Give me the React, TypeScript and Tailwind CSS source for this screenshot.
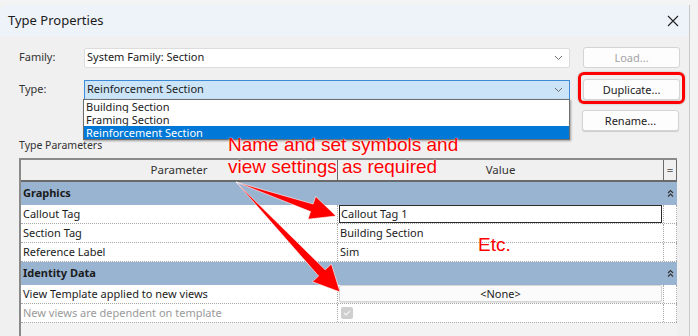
import type { ReactNode } from "react";

const UI = "font-['Noto_Sans','Open_Sans',sans-serif]";

function Chevron() {
  return (
    <svg width="9" height="6" viewBox="0 0 9 6" className="shrink-0">
      <path d="M1 1 L4.5 4.5 L8 1" fill="none" stroke="#6b6b6b" strokeWidth="1" />
    </svg>
  );
}

function Collapse() {
  return (
    <svg width="7" height="9" viewBox="0 0 7 9">
      <path d="M1 4 L3.5 1.5 L6 4 M1 7.5 L3.5 5 L6 7.5" fill="none" stroke="#333" strokeWidth="1.2" />
    </svg>
  );
}

function Button({ children, disabled }: { children: ReactNode; disabled?: boolean }) {
  return (
    <button
      type="button"
      className={`h-[21px] w-[97px] shrink-0 rounded-[3px] border border-[#d4d4d4] bg-[#fdfdfd] text-[11px] leading-none ${
        disabled ? "text-[#a3a3a3]" : "text-[#1b1b1b] shadow-[0_1px_1px_rgba(0,0,0,0.15)]"
      }`}
    >
      {children}
    </button>
  );
}

const rows: { kind: "group" | "row"; name: string; value?: ReactNode; muted?: boolean }[] = [
  { kind: "group", name: "Graphics" },
  {
    kind: "row",
    name: "Callout Tag",
    value: (
      <div className="mx-px flex h-[18px] items-center border border-[#2b2b2b] bg-white px-[1px]">Callout Tag 1</div>
    ),
  },
  { kind: "row", name: "Section Tag", value: <span className="pl-[2px]">Building Section</span> },
  { kind: "row", name: "Reference Label", value: <span className="pl-[2px]">Sim</span> },
  { kind: "group", name: "Identity Data" },
  {
    kind: "row",
    name: "View Template applied to new views",
    value: (
      <div className="mx-px flex h-[17px] items-center justify-center rounded-[2px] border border-[#d6d6d6] bg-[#fbfbfb] shadow-[0_1px_1px_rgba(0,0,0,0.12)]">
        &lt;None&gt;
      </div>
    ),
  },
  {
    kind: "row",
    name: "New views are dependent on template",
    muted: true,
    value: (
      <div className="ml-[3px] flex h-[12px] w-[12px] items-center justify-center rounded-[2px] bg-[#cfcfcf]">
        <svg width="8" height="6" viewBox="0 0 8 6">
          <path d="M1 3 L3 5 L7 1" fill="none" stroke="#f4f4f4" strokeWidth="1.2" />
        </svg>
      </div>
    ),
  },
];

export default function App() {
  return (
    <div className={`relative h-[336px] w-[698px] overflow-hidden bg-[#f3f3f3] pt-[5px] text-[#1b1b1b] ${UI}`}>
      <div className="flex h-[331px] w-[690px] flex-col overflow-hidden rounded-tl-[8px] border-r border-[#c9c9c9] bg-[#f0f0f0]">
        {/* title bar */}
        <div className="flex h-[31px] shrink-0 items-center justify-between bg-[#eef2f9] pl-[8px] pr-[10px]">
          <span className="text-[13px]">Type Properties</span>
          <svg width="12" height="12" viewBox="0 0 12 12">
            <path d="M1 1 L11 11 M11 1 L1 11" stroke="#222" strokeWidth="1.1" />
          </svg>
        </div>

        <div className="flex flex-col pl-[19px] pr-[10px] pt-[11px] text-[11px]">
          {/* family */}
          <div className="flex items-center">
            <span className="w-[65px] shrink-0 text-[#333]">Family:</span>
            <div className="flex h-[20px] w-[486px] shrink-0 items-center justify-between rounded-[2px] border border-[#dcdcdc] bg-white pl-[2px] pr-[6px]">
              <span>System Family: Section</span>
              <Chevron />
            </div>
            <div className="ml-[13px]">
              <Button disabled>Load...</Button>
            </div>
          </div>

          {/* type */}
          <div className="relative mt-[11px] flex items-center">
            <span className="w-[65px] shrink-0 text-[#333]">Type:</span>
            <div className="flex h-[20px] w-[486px] shrink-0 items-center justify-between border border-[#3d8ad6] bg-[#cce4f7] pl-[2px] pr-[6px]">
              <span>Reinforcement Section</span>
              <Chevron />
            </div>
            <div className="ml-[13px]">
              <Button>Duplicate...</Button>
            </div>
            <div className="absolute left-[64px] top-[20px] flex w-[487px] flex-col border border-[#6e6e6e] bg-white leading-[13px] shadow-[1px_1px_2px_rgba(0,0,0,0.35)]">
              <div className="h-[13px] overflow-hidden pl-[2px]">Building Section</div>
              <div className="h-[13px] overflow-hidden pl-[2px]">Framing Section</div>
              <div className="h-[13px] overflow-hidden bg-[#0078d7] pl-[2px] text-white">Reinforcement Section</div>
            </div>
          </div>

          {/* rename */}
          <div className="mt-[10px] flex justify-end">
            <Button>Rename...</Button>
          </div>

          <span className="mt-[7px] text-[10.5px] text-[#333]">Type Parameters</span>

          {/* table */}
          <div className="mt-[4px] flex w-[658px] flex-col border-l-2 border-[#8a8a8a] bg-[#f3f3f3] pb-[40px]">
            <div className="flex h-[24px] border-y-2 border-t-[#8a8a8a] border-b-[#6a6a6a] bg-[#f0f0f0] text-[11.5px] text-[#333]">
              <div className="flex w-[317px] items-center justify-center">Parameter</div>
              <div className="flex w-[327px] items-center justify-center border-l border-[#6a6a6a]">Value</div>
              <div className="flex w-[14px] items-center justify-center border-x border-[#6a6a6a] text-[#666]">=</div>
            </div>
            {rows.map((r) =>
              r.kind === "group" ? (
                <div key={r.name} className="flex h-[23px] items-center justify-between bg-[#99b4d1] pl-[2px] pr-[3px] font-bold">
                  <span>{r.name}</span>
                  <Collapse />
                </div>
              ) : (
                <div key={r.name} className="flex h-[19px] border-b border-dotted border-[#a8a8a8] bg-white">
                  <div className={`flex w-[317px] items-center pl-[2px] ${r.muted ? "text-[#9a9a9a]" : ""}`}>{r.name}</div>
                  <div className="flex w-[327px] flex-col justify-center border-l border-dotted border-[#a8a8a8]">{r.value}</div>
                  <div className="w-[14px] border-x border-dotted border-[#a8a8a8]" />
                </div>
              ),
            )}
          </div>
        </div>
      </div>

      {/* annotations */}
      <div className="pointer-events-none absolute left-[578px] top-[72px] h-[32px] w-[107px] rounded-[6px] border-[3px] border-[#ff0000] shadow-[0_0_2px_rgba(0,0,0,0.3)]" />
      <div className="pointer-events-none absolute left-[228px] top-[134px] font-['Liberation_Sans',Arial,sans-serif] text-[19px] leading-[22px] text-[#ff0000] [text-shadow:0_0_2px_#fff]">
        Name and set symbols and
        <br />
        view settings as required
      </div>
      <div className="pointer-events-none absolute left-[478px] top-[234px] font-['Liberation_Sans',Arial,sans-serif] text-[19px] leading-[22px] text-[#ff0000]">
        Etc.
      </div>
      <svg className="pointer-events-none absolute left-0 top-0" width="698" height="336" viewBox="0 0 698 336">
        <g fill="#ff0000" stroke="#fff" strokeWidth="0.6" strokeLinejoin="round">
          <polygon points="236,182 313.1,204 315.7,196.4 336,216 308,219.2 310.5,211.6" />
          <polygon points="236,182 325.2,269.8 331.4,264 340,292 312.4,281.8 318.6,276" />
        </g>
      </svg>
    </div>
  );
}
